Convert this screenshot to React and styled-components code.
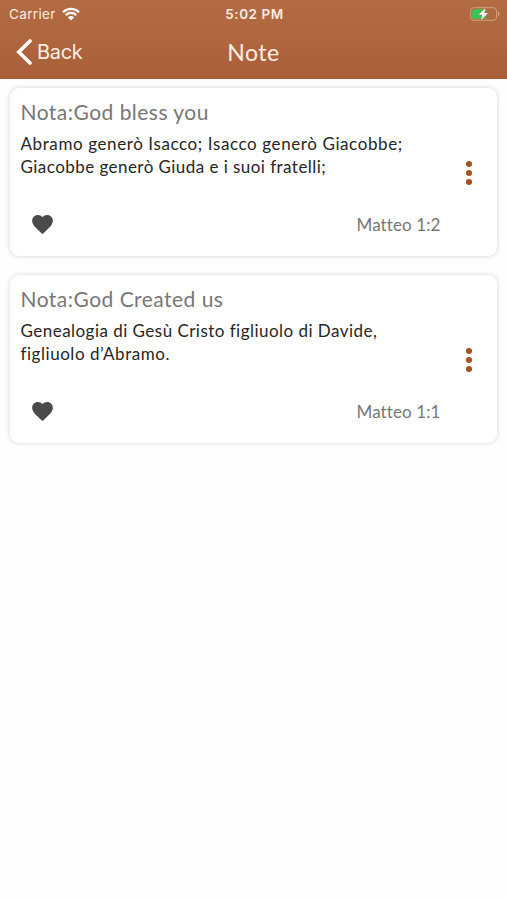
import styled, { createGlobalStyle } from "styled-components";

const GlobalStyle = createGlobalStyle`
  * {
    box-sizing: border-box;
  }

  body {
    margin: 0;
    background: #fff;
    font-family: Lato, "Open Sans", sans-serif;
  }
`;

const Screen = styled.div`
  width: 100%;
  min-height: 900px;
  background: #fefefe;
`;

const Header = styled.header`
  height: 79px;
  background: linear-gradient(#b36b44, #ae663e 55%, #a95e39);
  color: #fff;
`;

const StatusBar = styled.div`
  display: grid;
  grid-template-columns: 1fr auto 1fr;
  align-items: center;
  height: 27px;
  padding: 0 7px 0 9px;
  font-family: Inter, sans-serif;
  font-size: 13.5px;
  color: #fcebe1;
`;

const Carrier = styled.div`
  display: flex;
  align-items: center;
  gap: 6px;
  letter-spacing: 0.35px;
`;

const Time = styled.div`
  font-weight: 600;
  letter-spacing: 0.55px;
`;

const Battery = styled.svg`
  justify-self: end;
`;

const NavBar = styled.nav`
  display: grid;
  grid-template-columns: 1fr auto 1fr;
  align-items: center;
  height: 50px;
  padding: 0 16px;
`;

const Back = styled.button`
  display: flex;
  align-items: center;
  gap: 5px;
  padding: 0;
  border: 0;
  background: none;
  color: #fdeee5;
  font-family: Inter, sans-serif;
  font-size: 20px;
  letter-spacing: -0.3px;
  cursor: pointer;
`;

const Title = styled.h1`
  margin: 0;
  color: #fdeee5;
  font-size: 23px;
  font-weight: 400;
  line-height: 28px;
  letter-spacing: 0.5px;
  padding-bottom: 1px;
`;

const List = styled.main`
  display: flex;
  flex-direction: column;
  gap: 19px;
  padding: 9px 10px;
`;

const Card = styled.article`
  display: flex;
  height: 168px;
  padding: 10px 20px 0 10.5px;
  border-radius: 9px;
  background: #fff;
  box-shadow: 0 0 4px 1px rgba(0, 0, 0, 0.12);
`;

const Content = styled.div`
  display: flex;
  flex: 1;
  flex-direction: column;
`;

const NoteTitle = styled.h2`
  margin: 0 0 7px;
  color: #777;
  font-size: 21px;
  font-weight: 400;
  line-height: 27px;
  letter-spacing: 0.47px;
`;

const Verse = styled.p`
  margin: 0;
  color: #262626;
  font-size: 17px;
  line-height: 23px;
`;

const Line = styled.span`
  display: block;
  letter-spacing: ${(props) => props.$spacing}px;
`;

const Footer = styled.div`
  display: flex;
  align-items: center;
  justify-content: space-between;
  height: 24px;
  margin-top: 34px;
  padding: 0 25px 0 11px;
`;

const Reference = styled.span`
  color: #777;
  font-size: 17px;
  letter-spacing: 0.1px;
`;

const Menu = styled.button`
  display: flex;
  flex-direction: column;
  align-self: flex-start;
  gap: 3px;
  margin-top: 63px;
  padding: 0 5px 0 0;
  border: 0;
  background: none;
  cursor: pointer;
`;

const Dot = styled.span`
  width: 6.5px;
  height: 6px;
  border-radius: 50%;
  background: #a9511c;
`;

const notes = [
  {
    title: "Nota:God bless you",
    lines: [
      { text: "Abramo generò Isacco; Isacco generò Giacobbe;", spacing: 0.6 },
      { text: "Giacobbe generò Giuda e i suoi fratelli;", spacing: 0.45 },
    ],
    reference: "Matteo 1:2",
  },
  {
    title: "Nota:God Created us",
    lines: [
      { text: "Genealogia di Gesù Cristo figliuolo di Davide,", spacing: 0.47 },
      { text: "figliuolo d’Abramo.", spacing: 0.54 },
    ],
    reference: "Matteo 1:1",
  },
];

const WifiIcon = () => (
  <svg width="18" height="14" viewBox="0 0 18 14" fill="none">
    <path
      d="M1 5.2a11.4 11.4 0 0 1 16 0M3.8 8.1a7.4 7.4 0 0 1 10.4 0"
      stroke="#fff"
      strokeWidth="2.3"
    />
    <path d="M9 13.5L5.9 10.4a4.4 4.4 0 0 1 6.2 0z" fill="#fff" />
  </svg>
);

const BatteryIcon = () => (
  <Battery width="30" height="14" viewBox="0 0 30 14">
    <rect x="0.7" y="0.7" width="25.8" height="12.6" rx="3" fill="none" stroke="#d4a180" />
    <path d="M28 4.5c2 .8 2 4.2 0 5z" fill="#d4a180" />
    <path d="M3.7 2.2h12.5v9.6H3.7a1.5 1.5 0 0 1-1.5-1.5V3.7a1.5 1.5 0 0 1 1.5-1.5z" fill="#35c759" />
    <path
      d="M15.3 1.2L8.7 7.8h3.5L11.2 13l6.8-7h-3.7z"
      fill="#fff"
      stroke="#b16b44"
      strokeWidth="1"
      paintOrder="stroke"
    />
  </Battery>
);

const BackIcon = () => (
  <svg width="16" height="26" viewBox="0 0 16 26" fill="none">
    <path
      d="M14 2L2.8 13 14 24"
      stroke="#fff"
      strokeWidth="3.6"
      strokeLinecap="round"
    />
  </svg>
);

const HeartIcon = () => (
  <svg width="21" height="19" viewBox="2 3 20 18.35" fill="#4a4a4a">
    <path d="M12 21.35l-1.45-1.32C5.4 15.36 2 12.28 2 8.5 2 5.42 4.42 3 7.5 3c1.74 0 3.41.81 4.5 2.09C13.09 3.81 14.76 3 16.5 3 19.58 3 22 5.42 22 8.5c0 3.78-3.4 6.86-8.55 11.54z" />
  </svg>
);

const Note = ({ note }) => (
  <Card>
    <Content>
      <NoteTitle>{note.title}</NoteTitle>
      <Verse>
        {note.lines.map((line) => (
          <Line key={line.text} $spacing={line.spacing}>
            {line.text}
          </Line>
        ))}
      </Verse>
      <Footer>
        <HeartIcon />
        <Reference>{note.reference}</Reference>
      </Footer>
    </Content>
    <Menu aria-label="Menu">
      <Dot />
      <Dot />
      <Dot />
    </Menu>
  </Card>
);

const App = () => {
  return (
    <Screen>
      <GlobalStyle />
      <Header>
        <StatusBar>
          <Carrier>
            Carrier
            <WifiIcon />
          </Carrier>
          <Time>5:02 PM</Time>
          <BatteryIcon />
        </StatusBar>
        <NavBar>
          <Back>
            <BackIcon />
            Back
          </Back>
          <Title>Note</Title>
        </NavBar>
      </Header>
      <List>
        {notes.map((note) => (
          <Note key={note.title} note={note} />
        ))}
      </List>
    </Screen>
  );
};
export default App;
